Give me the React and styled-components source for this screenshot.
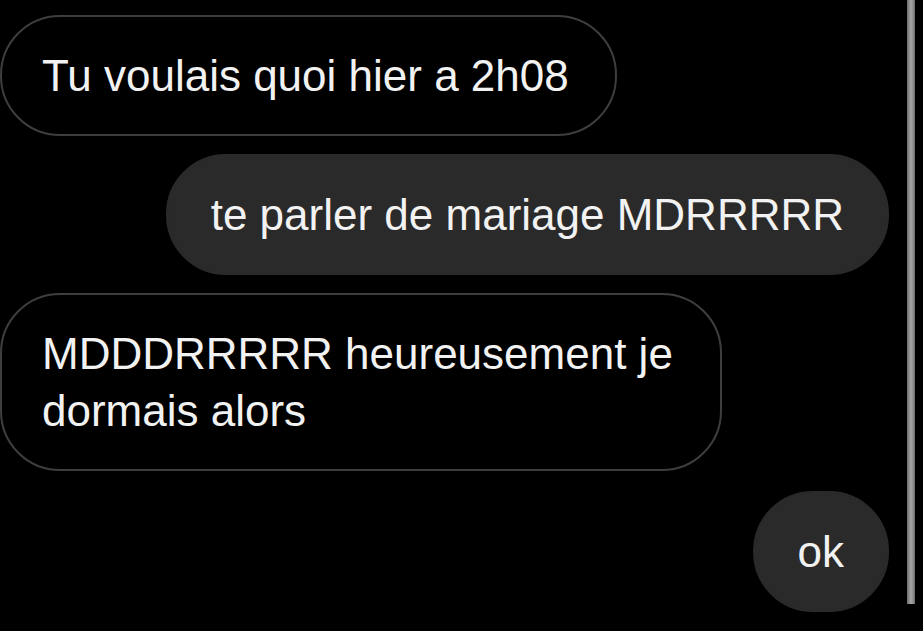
import React from 'react'
import styled, { createGlobalStyle } from 'styled-components'

const GlobalStyle = createGlobalStyle`
    html, body {
        margin: 0;
        padding: 0;
        background: #000;
    }
    body {
        font-family: 'Liberation Sans', Arial, sans-serif;
        overflow: hidden;
    }
`;

const Screen = styled.div`
    width: 923px;
    height: 631px;
    background: #000;
    display: flex;
    align-items: flex-start;
`;

const Thread = styled.div`
    flex: 1;
    display: flex;
    flex-direction: column;
    gap: 18px;
    padding: 15px 0 0 0;
`;

const Row = styled.div`
    display: flex;
    justify-content: ${p => (p.$mine ? 'flex-end' : 'flex-start')};
    margin-top: ${p => (p.$last ? '2px' : '0')};
`;

const Bubble = styled.div`
    box-sizing: border-box;
    max-width: ${p => (p.$mine ? 'none' : '722px')};
    padding: 30px ${p => (p.$mine ? '43px' : '46px')} 30px ${p => (p.$mine ? '43px' : '40px')};
    border-radius: 60px;
    border: 2px solid ${p => (p.$mine ? '#2a2a2a' : '#3e3e3e')};
    background: ${p => (p.$mine ? '#2a2a2a' : '#000')};
    color: #f2f2f2;
    font-size: 44px;
    line-height: 57px;
    white-space: ${p => (p.$mine ? 'nowrap' : 'normal')};
`;

const Track = styled.div`
    width: 8px;
    height: 604px;
    margin: 0 8px 0 18px;
    background: linear-gradient(90deg, #6e6e6e 0%, #a2a2a2 45%, #9a9a9a 65%, #6a6a6a 100%);
    flex-shrink: 0;
`;

const messages = [
    { mine: false, text: 'Tu voulais quoi hier a 2h08' },
    { mine: true, text: 'te parler de mariage MDRRRRR' },
    { mine: false, text: 'MDDDRRRRR heureusement je dormais alors' },
    { mine: true, text: 'ok' },
]

const App = () => {
    return (
        <>
            <GlobalStyle />
            <Screen>
                <Thread>
                    {messages.map((m, i) => (
                        <Row key={i} $mine={m.mine} $last={i === messages.length - 1}>
                            <Bubble $mine={m.mine}>{m.text}</Bubble>
                        </Row>
                    ))}
                </Thread>
                <Track />
            </Screen>
        </>
    )
}

export default App
